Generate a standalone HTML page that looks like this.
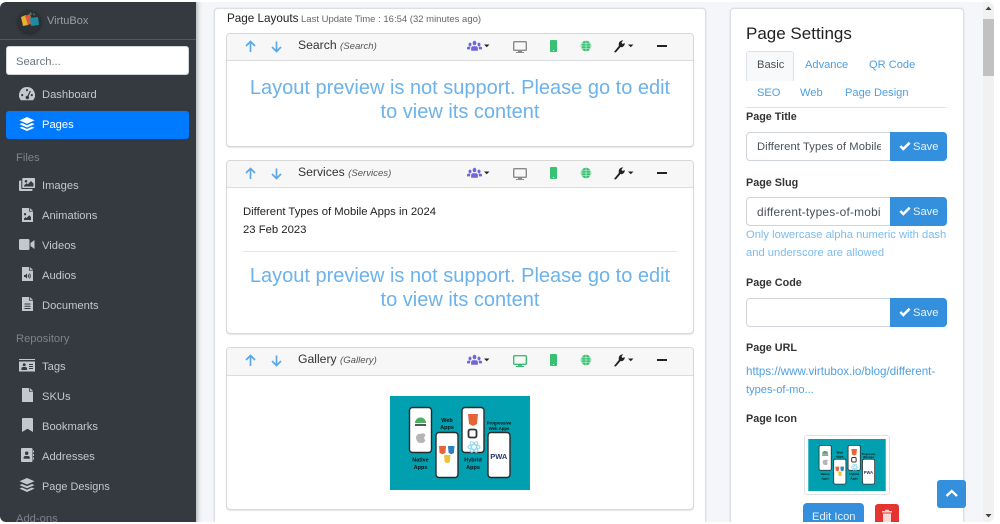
<!DOCTYPE html>
<html><head><meta charset="utf-8">
<style>
html,body{margin:0;padding:0;width:1000px;height:524px;overflow:hidden;background:#f4f6f9}
body{position:relative;font-family:"Liberation Sans",sans-serif;color:#212529}
.t{position:absolute;white-space:nowrap;line-height:16px}
.b{position:absolute;box-sizing:border-box}
svg{position:absolute;overflow:visible}
.nav{color:#c2c7d0;font-size:11.2px;left:42px}
.sec{color:#7d8289;font-size:11.2px;left:16px}
.card{background:#fff;border:1px solid #dcdfe3;border-radius:4px;box-shadow:0 0 0 1px rgba(0,0,0,.04)}
.lay{background:#fff;border:1px solid #d8d8d8;border-radius:4px;left:226px;width:468px;box-shadow:0 1px 1px rgba(0,0,0,.1)}
.hd{left:227px;width:466px;height:27px;background:#f7f7f7;border-bottom:1px solid #dcdcdc;border-radius:4px 4px 0 0}
.big{color:#6cb2eb;font-size:20px;left:227px;width:466px;text-align:center;line-height:24px}
.ttl{font-size:12.2px;color:#333;left:298px}
.sub{font-size:9.6px;color:#555;font-style:italic}
.lbl{font-size:10.8px;font-weight:bold;color:#333;left:746px}
.inp{left:746px;width:145px;height:29px;background:#fff;border:1px solid #ced4da;border-radius:4px 0 0 4px}
.val{font-size:11.2px;color:#495057;left:757px;width:124px;overflow:hidden}
.sv{left:890px;width:57px;height:29px;background:#3490dc;border-radius:0 4px 4px 0}
.svt{font-size:11.2px;color:#e8f2fb;left:913px}
.tab{font-size:11.1px;color:#4f9fe2}
</style></head><body>

<svg width="0" height="0" style="position:absolute">
<defs>
<symbol id="layers" viewBox="0 0 16 14"><path fill="currentColor" d="M8 0 L15.500 3.400 8 6.800 .5 3.400Z M3 6 L.5 7.100 8 10.500 15.500 7.100 13 6 8 8.300Z M3 9.700 L.5 10.700 8 14 15.500 10.700 13 9.700 8 12Z"/></symbol>
<symbol id="fileimg" viewBox="0 0 11 14"><path fill="currentColor" fill-rule="evenodd" d="M0 0H7V3.600H11V14H0Z M7.800 0 11 2.900H7.800Z M3 5A1.200 1.200 0 1 0 3 7.400 1.200 1.200 0 0 0 3 5Z M2 12H9V9L7.200 7.300 4.600 10 3.600 9 2 10.500Z"/></symbol>
<symbol id="stack" viewBox="0 0 16 14"><path fill="currentColor" d="M8 0 L15.500 3.200 8 6.500 .5 3.200Z M3 6 L.5 7.100 8 10.300 15.500 7.100 13 6 8 8.100Z M3 9.500 L.5 10.600 8 14 15.500 10.600 13 9.500 8 11.800Z"/></symbol>
<symbol id="row" viewBox="0 0 468 27">
<path d="M24.500 19V9M20 13 24.500 8.500 29 13M50.500 8.500V18.500M46 14 50.500 18.500 55 14" fill="none" stroke="#5ba8ea" stroke-width="1.700"/>
</symbol>
<symbol id="ck" viewBox="0 0 12 10"><path d="M1.300 5 4.300 8 10.700 1.700" fill="none" stroke="#fff" stroke-width="2.500"/></symbol>
<symbol id="phones" viewBox="0 0 140 94">
<rect width="140" height="94" fill="#00a0b0"/>
<g fill="#fff" stroke="#2a2a2a" stroke-width="1.400">
<rect x="19.500" y="11.500" width="22" height="45" rx="3"/>
<rect x="46" y="36.500" width="22" height="45" rx="3"/>
<rect x="72" y="11.500" width="22" height="45" rx="3"/>
<rect x="98" y="36.500" width="22" height="45" rx="3"/>
</g>
<path d="M25 27a5.500 5.500 0 0 1 11 0Z" fill="#4caf60"/>
<path d="M25 28h11v2h-11z" fill="#556"/>
<path d="M30.500 38c3-1.500 5 0 5 1.500-2 1.500-1.500 4 0 4.500-1 2.500-2.500 3.500-5 2.800-2.500.7-4-2-4.500-4.800 0-3 2.500-5 4.500-4Z" fill="#b5b5b5"/>
<path d="M78 18h10l-1 10-4 2-4-2Z" fill="#e6643a"/>
<rect x="78.500" y="33.500" width="8" height="8" rx="1.800" fill="#fff" stroke="#333" stroke-width="1.800"/>
<g fill="none" stroke="#8fd6ee"><ellipse cx="84" cy="51" rx="6" ry="2.400"/><ellipse cx="84" cy="51" rx="6" ry="2.400" transform="rotate(60 84 51)"/><ellipse cx="84" cy="51" rx="6" ry="2.400" transform="rotate(120 84 51)"/></g>
<path d="M49 50h7l-.6 7-2.900 1.200-2.900-1.200Z" fill="#e6643a"/>
<path d="M58 50h6.500l-.6 7-2.650 1.200-2.650-1.200Z" fill="#2f80c2"/>
<path d="M54 59h6.500l-.6 7-2.650 1.200-2.650-1.200Z" fill="#eec33a"/>
<text x="108.800" y="63" text-anchor="middle" font-family="Liberation Sans" font-size="7.500" font-weight="bold" fill="#2a3a6a">PWA</text>
<g font-family="Liberation Sans" font-size="5.500" font-weight="bold" text-anchor="middle" fill="#111">
<text x="30.500" y="65.500">Native</text><text x="30.500" y="73">Apps</text>
<text x="57" y="26">Web</text><text x="57" y="33">Apps</text>
<text x="83" y="65.500">Hybrid</text><text x="83" y="73">Apps</text>
<text x="109" y="28.500" font-size="4.300">Progressive</text><text x="109" y="34" font-size="4.300">Web Apps</text>
</g>
</symbol>
<symbol id="ctl" viewBox="0 0 240 16">
<g fill="#6f66d9" transform="scale(.75 .9)"><circle cx="10" cy="4.500" r="2.500"/><circle cx="4" cy="6" r="2"/><circle cx="16" cy="6" r="2"/><path d="M5.500 13V10.500Q5.500 8 8 8H12Q14.500 8 14.500 10.500V13Z"/><path d="M0 11V10Q0 8.500 2 8.500H4.500L4 11.500H0ZM20 11V10Q20 8.500 18 8.500H15.500L16 11.500H20Z"/></g>
<path d="M17 5.500h5.500l-2.750 2.800Z" fill="#222"/>
<rect x="46.700" y="2.700" width="12.600" height="8.600" rx=".8" fill="none" stroke="#8a8a8a" stroke-width="1.400"/><path d="M51 12h4v1h2V14H49V13h2Z" fill="#8a8a8a"/>
<rect x="83" y="1" width="7" height="12" rx="1" fill="#38c172"/><rect x="86" y="11" width="1" height="1" fill="#cfe"/>
<circle cx="119" cy="7" r="5.300" fill="#38c172"/><path d="M114 7h10M119 2v10M115.500 3q-2 4 0 8M122.500 3q2 4 0 8M114.500 4.500h9M114.500 9.500h9" stroke="#d8f3e3" stroke-width=".6" fill="none"/>
<path d="M147 13 L151.800 7 Q151 3 154 1.700 L156.300 1.300 154.500 3.500 155.500 5 157.700 4 Q158 7 155 8.200 L153.500 8 148.800 13.500Z" fill="#222"/>
<path d="M161 5.500h5.500l-2.750 2.800Z" fill="#222"/>
<rect x="190" y="6" width="10" height="2" fill="#222"/>
</symbol>
</defs></svg>

<!-- scrollbar -->
<div class="b" style="left:983px;top:0;width:11px;height:524px;background:#f1f1f1"></div>
<div class="b" style="left:983px;top:19px;width:11px;height:57px;background:#c1c1c1"></div>
<svg style="left:983px;top:0" width="11" height="524"><path d="M2.500 10 5.500 6.500 8.500 10Z M2.500 514 5.500 517.500 8.500 514Z" fill="#444"/></svg>

<!-- sidebar -->
<div class="b" style="left:0;top:0;width:196px;height:524px;background:#343a40;box-shadow:1px 0 5px rgba(0,0,0,.35)"></div>
<div class="b" style="left:0;top:39px;width:196px;height:1px;background:#4f5962"></div>
<div class="b" style="left:18px;top:10px;width:23px;height:23px;border-radius:50%;background:#2c3136;box-shadow:0 1px 3px rgba(0,0,0,.4)"></div>
<svg style="left:20px;top:11px" width="20" height="16"><path d="M1 6 6 4 8 14 3 15Z" fill="#e6b030"/><path d="M5 5 10 3 13 12 8 14Z" fill="#d9573a"/><path d="M10 7 18 6 19 14 11 15Z" fill="#1f8ca3"/><path d="M9 3 11 1 12 4 Z M13 2 15 3 14 5Z" fill="#3a8a5f"/></svg>
<div class="t" style="left:47px;top:13px;font-size:11px;color:#9b9fa4">VirtuBox</div>
<div class="b" style="left:6px;top:46px;width:183px;height:29px;background:#fff;border:1px solid #ced4da;border-radius:3px"></div>
<div class="t" style="left:16px;top:54px;font-size:11.200px;color:#6c757d">Search...</div>

<svg style="left:19px;top:87px" width="16" height="14"><path fill="#c2c7d0" fill-rule="evenodd" d="M8 0A8 8 0 0 0 2 13.300H14A8 8 0 0 0 8 0ZM8 2A1.100 1.100 0 1 1 8 4.200 1.100 1.100 0 0 1 8 2ZM3.200 7A1.100 1.100 0 1 1 3.200 9.200 1.100 1.100 0 0 1 3.200 7ZM12.800 7A1.100 1.100 0 1 1 12.800 9.200 1.100 1.100 0 0 1 12.800 7ZM10.800 3.800 11.800 4.300 9.600 9.200A1.800 1.800 0 1 1 8.500 8.700Z"/></svg>
<div class="t nav" style="top:87px">Dashboard</div>

<div class="b" style="left:6px;top:111px;width:183px;height:28px;background:#007bff;border-radius:3px"></div>
<svg style="left:19px;top:117px;color:#fff" width="16" height="14"><use href="#layers"/></svg>
<div class="t nav" style="top:117px;color:#fff">Pages</div>

<div class="t sec" style="top:150px">Files</div>

<svg style="left:19px;top:178px" width="16" height="14"><path fill="#c2c7d0" fill-rule="evenodd" d="M4 0H15.500Q16 0 16 .8V9.500Q16 10 15.500 10H4Q3.300 10 3.300 9.500V.8Q3.300 0 4 0ZM7 2A1.300 1.300 0 1 0 7 4.600 1.300 1.300 0 0 0 7 2ZM5 8.500H14.500V5.500L12 3 8.800 6.300 7.500 5.300 5 7.500Z"/><path fill="#c2c7d0" d="M2.300 2.500V10.300Q2.300 11 3 11H13.500V12Q13.500 13 12.500 13H1Q0 13 0 12V3.500Q0 2.500 1 2.500Z"/></svg>
<div class="t nav" style="top:178px">Images</div>
<svg style="left:22px;top:208px;color:#c2c7d0" width="11" height="14"><use href="#fileimg"/></svg>
<div class="t nav" style="top:208px">Animations</div>
<svg style="left:19px;top:239px" width="16" height="12"><rect x="0" y="0" width="10.500" height="11" rx="1.500" fill="#c2c7d0"/><path d="M11.500 4 15.500 1V10L11.500 7Z" fill="#c2c7d0"/></svg>
<div class="t nav" style="top:238px">Videos</div>
<svg style="left:22px;top:267px" width="11" height="14"><path fill="#c2c7d0" fill-rule="evenodd" d="M0 0H7V3.600H11V14H0Z M7.800 0 11 2.900H7.800Z M2 8H3.300L5 6.500V11.500L3.300 10H2Z"/><path d="M6 7.500Q7 9 6 10.500M7.500 6.500Q9 9 7.500 11.500" stroke="#343a40" fill="none"/></svg>
<div class="t nav" style="top:268px">Audios</div>
<svg style="left:22px;top:297px" width="11" height="14"><path fill="#c2c7d0" fill-rule="evenodd" d="M0 0H7V3.600H11V14H0Z M7.800 0 11 2.900H7.800Z M2.500 6.500V7.500H8.500V6.500Z M2.500 8.700V9.700H8.500V8.700Z M2.500 11V12H8.500V11Z"/></svg>
<div class="t nav" style="top:298px">Documents</div>

<div class="t sec" style="top:331px">Repository</div>

<svg style="left:19px;top:359px" width="16" height="13"><path fill="#c2c7d0" fill-rule="evenodd" d="M0 0H16V1H0Z M0 2.500H16V12.500H0Z M5.200 4.300A1.500 1.500 0 1 0 5.200 7.300 1.500 1.500 0 0 0 5.200 4.300Z M2.400 11H8V9.800Q8 8 6.500 8H4Q2.400 8 2.400 9.800Z M10 5V6H14V5Z M10 7V8H14V7Z M10 9V10H14V9Z"/></svg>
<div class="t nav" style="top:359px">Tags</div>
<svg style="left:22px;top:388px" width="11" height="14"><path fill="#c2c7d0" d="M0 0H7V3.600H11V14H0Z M7.800 0 11 2.900H7.800Z"/></svg>
<div class="t nav" style="top:389px">SKUs</div>
<svg style="left:22px;top:418px" width="11" height="14"><path fill="#c2c7d0" d="M0 1Q0 0 1 0H10Q11 0 11 1V14L5.500 10.800 0 14Z"/></svg>
<div class="t nav" style="top:419px">Bookmarks</div>
<svg style="left:21px;top:448px" width="13" height="14"><path fill="#c2c7d0" fill-rule="evenodd" d="M1 0H10.500Q11.500 0 11.500 1V13Q11.500 14 10.500 14H1Q0 14 0 13V1Q0 0 1 0Z M5.700 3.500A1.700 1.700 0 1 0 5.700 7 1.700 1.700 0 0 0 5.700 3.500Z M2.600 10.800H8.800V9.800Q8.800 8 7 8H4.400Q2.600 8 2.600 9.800Z"/><path fill="#c2c7d0" d="M12 2.500H13V4.500H12ZM12 6H13V8H12ZM12 9.500H13V11.500H12Z"/></svg>
<div class="t nav" style="top:449px">Addresses</div>
<svg style="left:19px;top:478px;color:#c2c7d0" width="16" height="14"><use href="#stack"/></svg>
<div class="t nav" style="top:479px;font-size:10.900px">Page Designs</div>
<div class="t sec" style="top:511px">Add-ons</div>

<!-- main card -->
<div class="b card" style="left:214px;top:8px;width:492px;height:530px"></div>
<div class="t" style="left:227px;top:11px;font-size:11.700px;color:#222">Page Layouts</div>
<div class="t" style="left:301px;top:12px;font-size:9.500px;color:#666">Last Update Time : 16:54 (32 minutes ago)</div>

<div class="b lay" style="top:33px;height:114px"></div>
<div class="b hd" style="top:34px"></div>
<svg style="left:226px;top:33px" width="468" height="27"><use href="#row"/></svg>
<div class="t ttl" style="top:37px">Search <span class="sub">(Search)</span></div>
<svg style="left:467px;top:39px" width="240" height="16"><use href="#ctl"/></svg>
<div class="t big" style="top:76px">Layout preview is not support. Please go to edit</div>
<div class="t big" style="top:100px">to view its content</div>

<div class="b lay" style="top:160px;height:174px"></div>
<div class="b hd" style="top:161px"></div>
<svg style="left:226px;top:160px" width="468" height="27"><use href="#row"/></svg>
<div class="t ttl" style="top:164px">Services <span class="sub">(Services)</span></div>
<svg style="left:467px;top:166px" width="240" height="16"><use href="#ctl"/></svg>
<div class="t" style="left:243px;top:204px;font-size:11.300px;color:#222">Different Types of Mobile Apps in 2024</div>
<div class="t" style="left:243px;top:222px;font-size:11.300px;color:#222">23 Feb 2023</div>
<div class="b" style="left:243px;top:251px;width:434px;height:1px;background:#e4e4e4"></div>
<div class="t big" style="top:264px">Layout preview is not support. Please go to edit</div>
<div class="t big" style="top:288px">to view its content</div>

<div class="b lay" style="top:347px;height:163px"></div>
<div class="b hd" style="top:348px;height:28px"></div>
<svg style="left:226px;top:347px" width="468" height="27"><use href="#row"/></svg>
<div class="t ttl" style="top:351px">Gallery <span class="sub">(Gallery)</span></div>
<svg style="left:467px;top:353px" width="240" height="16"><use href="#ctl"/></svg>
<div class="b" style="left:512px;top:354px;width:16px;height:14px;background:#f7f7f7"></div>
<svg style="left:513px;top:355px" width="14" height="12"><rect x=".7" y=".7" width="12.600" height="8.600" rx=".8" fill="none" stroke="#38c172" stroke-width="1.400"/><path d="M5 10h4v1h2v1H3v-1h2Z" fill="#38c172"/></svg>
<svg style="left:390px;top:396px" width="140" height="94"><use href="#phones"/></svg>

<!-- settings card -->
<div class="b card" style="left:730px;top:8px;width:234px;height:530px"></div>
<div class="t" style="left:746px;top:24px;font-size:17px;line-height:20px;color:#222">Page Settings</div>
<div class="b" style="left:746px;top:51px;width:48px;height:30px;background:#f8f9fa;border:1px solid #dee2e6;border-bottom:0;border-radius:3px 3px 0 0"></div>
<div class="t" style="left:757px;top:57px;font-size:11.200px;color:#495057">Basic</div>
<div class="t tab" style="left:805px;top:57px">Advance</div>
<div class="t tab" style="left:869px;top:57px">QR Code</div>
<div class="t tab" style="left:757px;top:85px">SEO</div>
<div class="t tab" style="left:800px;top:85px">Web</div>
<div class="t tab" style="left:845px;top:85px">Page Design</div>
<div class="b" style="left:746px;top:107px;width:201px;height:1px;background:#dee2e6"></div>

<div class="t lbl" style="top:109px">Page Title</div>
<div class="b inp" style="top:132px"></div>
<div class="t val" style="top:139px;letter-spacing:.1px">Different Types of Mobile Apps</div>
<div class="b sv" style="top:132px"></div>
<svg style="left:899px;top:141px" width="12" height="10"><use href="#ck"/></svg>
<div class="t svt" style="top:139px">Save</div>

<div class="t lbl" style="top:175px">Page Slug</div>
<div class="b inp" style="top:197px"></div>
<div class="t val" style="top:204px;font-size:11.900px;letter-spacing:.22px">different-types-of-mobile-apps</div>
<div class="b sv" style="top:197px"></div>
<svg style="left:899px;top:206px" width="12" height="10"><use href="#ck"/></svg>
<div class="t svt" style="top:204px">Save</div>
<div class="t" style="left:746px;top:227px;font-size:11.200px;color:#7cbcf0">Only lowercase alpha numeric with dash</div>
<div class="t" style="left:746px;top:245px;font-size:11.200px;color:#7cbcf0">and underscore are allowed</div>

<div class="t lbl" style="top:275px">Page Code</div>
<div class="b inp" style="top:298px"></div>
<div class="b sv" style="top:298px"></div>
<svg style="left:899px;top:307px" width="12" height="10"><use href="#ck"/></svg>
<div class="t svt" style="top:305px">Save</div>

<div class="t lbl" style="top:340px">Page URL</div>
<div class="t tab" style="left:746px;top:364px;font-size:11.600px">https://www.virtubox.io/blog/different-</div>
<div class="t tab" style="left:746px;top:382px">types-of-mo...</div>

<div class="t lbl" style="top:411px">Page Icon</div>
<div class="b" style="left:804px;top:435px;width:86px;height:60px;background:#fff;border:1px solid #dee2e6;border-radius:3px"></div>
<svg style="left:808px;top:439px" width="78" height="52"><use href="#phones"/></svg>
<div class="b" style="left:803px;top:503px;width:61px;height:30px;background:#3490dc;border-radius:4px"></div>
<div class="t" style="left:812px;top:509px;font-size:11.200px;color:#e8f2fb">Edit Icon</div>
<div class="b" style="left:875px;top:504px;width:24px;height:28px;background:#e3342f;border-radius:3px"></div>
<svg style="left:882px;top:509px" width="10" height="15"><path d="M0 2H3L3.500 .8H6.500L7 2H10V3.500H0ZM1 4.500H9V15H1Z" fill="#fbd9d8"/></svg>

<div class="b" style="left:937px;top:480px;width:29px;height:28px;background:#3490dc;border-radius:3px"></div>
<svg style="left:945px;top:489px" width="14" height="9"><path d="M1.500 7 6.800 2 12 7" fill="none" stroke="#fff" stroke-width="2.300"/></svg>

<!-- window frame -->
<div class="b" style="left:0;top:2px;width:994px;height:520px;border-radius:6px;box-shadow:0 0 0 20px #fff"></div>

</body></html>
